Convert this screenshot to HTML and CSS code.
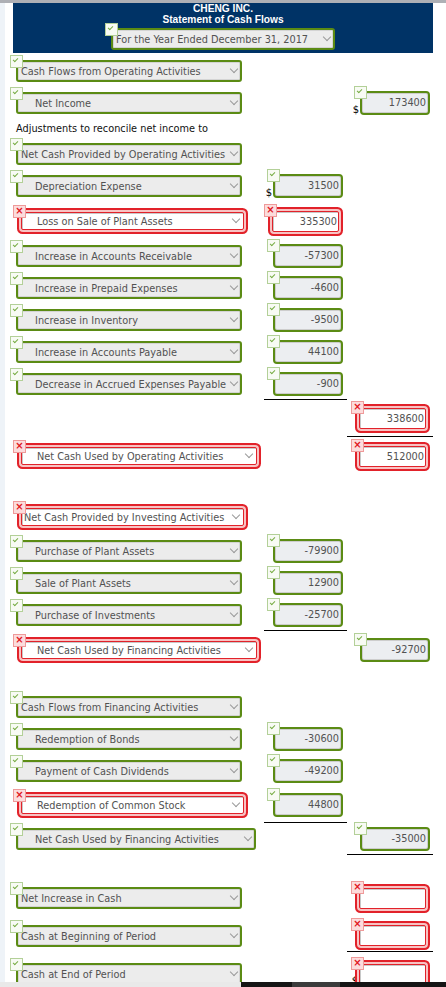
FILE: index.html
```html
<!DOCTYPE html>
<html lang="en">
    <head>
        <meta charset="UTF-8">
        <title>Statement of Cash Flows</title>
        <link rel="stylesheet" href="styles.css">
    </head>
    <body>
        <div class="topbar"></div>
        <div class="page">
            <div class="head">
                <h1>CHENG INC.<br>Statement of Cash Flows</h1>
                <div class="sel ok"><span>For the Year Ended December 31, 2017</span><i class="chev"></i></div>
            </div>
            <div class="sheet">
                <div class="row first">
                    <div class="cell"><div class="sel ok"><span>Cash Flows from Operating Activities</span><i class="chev"></i></div></div>
                </div>
                <div class="row">
                    <div class="cell"><div class="sel ind ok"><span>Net Income</span><i class="chev"></i></div></div>
                    <div class="cell amt"></div>
                    <div class="cell amt r"><b class="cur">$</b><div class="num ok">173400</div></div>
                </div>
                <div class="note">Adjustments to reconcile net income to</div>
                <div class="row">
                    <div class="cell"><div class="sel ok"><span>Net Cash Provided by Operating Activities</span><i class="chev"></i></div></div>
                </div>
                <div class="row">
                    <div class="cell"><div class="sel ind ok"><span>Depreciation Expense</span><i class="chev"></i></div></div>
                    <div class="cell amt"><b class="cur">$</b><div class="num ok">31500</div></div>
                </div>
                <div class="row tall loss">
                    <div class="cell"><div class="sel ind bad"><span>Loss on Sale of Plant Assets</span><i class="chev"></i></div></div>
                    <div class="cell amt"><div class="num bad">335300</div></div>
                </div>
                <div class="row">
                    <div class="cell"><div class="sel ind ok"><span>Increase in Accounts Receivable</span><i class="chev"></i></div></div>
                    <div class="cell amt"><div class="num ok">-57300</div></div>
                </div>
                <div class="row">
                    <div class="cell"><div class="sel ind ok"><span>Increase in Prepaid Expenses</span><i class="chev"></i></div></div>
                    <div class="cell amt"><div class="num ok">-4600</div></div>
                </div>
                <div class="row">
                    <div class="cell"><div class="sel ind ok"><span>Increase in Inventory</span><i class="chev"></i></div></div>
                    <div class="cell amt"><div class="num ok">-9500</div></div>
                </div>
                <div class="row">
                    <div class="cell"><div class="sel ind ok"><span>Increase in Accounts Payable</span><i class="chev"></i></div></div>
                    <div class="cell amt"><div class="num ok">44100</div></div>
                </div>
                <div class="row">
                    <div class="cell"><div class="sel ind ok"><span>Decrease in Accrued Expenses Payable</span><i class="chev"></i></div></div>
                    <div class="cell amt tot"><div class="num ok">-900</div></div>
                </div>
                <div class="row tall sub">
                    <div class="cell"></div>
                    <div class="cell amt"></div>
                    <div class="cell amt r tot"><div class="num bad">338600</div></div>
                </div>
                <div class="row tall">
                    <div class="cell"><div class="sel ind bad wide"><span>Net Cash Used by Operating Activities</span><i class="chev"></i></div></div>
                    <div class="cell amt"></div>
                    <div class="cell amt r"><div class="num bad">512000</div></div>
                </div>

                <div class="row tall invest">
                    <div class="cell"><div class="sel bad"><span>Net Cash Provided by Investing Activities</span><i class="chev"></i></div></div>
                </div>
                <div class="row">
                    <div class="cell"><div class="sel ind ok"><span>Purchase of Plant Assets</span><i class="chev"></i></div></div>
                    <div class="cell amt"><div class="num ok">-79900</div></div>
                </div>
                <div class="row">
                    <div class="cell"><div class="sel ind ok"><span>Sale of Plant Assets</span><i class="chev"></i></div></div>
                    <div class="cell amt"><div class="num ok">12900</div></div>
                </div>
                <div class="row">
                    <div class="cell"><div class="sel ind ok"><span>Purchase of Investments</span><i class="chev"></i></div></div>
                    <div class="cell amt tot"><div class="num ok">-25700</div></div>
                </div>
                <div class="row tall net-invest">
                    <div class="cell"><div class="sel ind bad wide"><span>Net Cash Used by Financing Activities</span><i class="chev"></i></div></div>
                    <div class="cell amt"></div>
                    <div class="cell amt r"><div class="num ok">-92700</div></div>
                </div>

                <div class="row finance">
                    <div class="cell"><div class="sel ok"><span>Cash Flows from Financing Activities</span><i class="chev"></i></div></div>
                </div>
                <div class="row">
                    <div class="cell"><div class="sel ind ok"><span>Redemption of Bonds</span><i class="chev"></i></div></div>
                    <div class="cell amt"><div class="num ok">-30600</div></div>
                </div>
                <div class="row">
                    <div class="cell"><div class="sel ind ok"><span>Payment of Cash Dividends</span><i class="chev"></i></div></div>
                    <div class="cell amt"><div class="num ok">-49200</div></div>
                </div>
                <div class="row tall">
                    <div class="cell"><div class="sel ind bad"><span>Redemption of Common Stock</span><i class="chev"></i></div></div>
                    <div class="cell amt tot"><div class="num ok">44800</div></div>
                </div>
                <div class="row">
                    <div class="cell"><div class="sel ind ok wide"><span>Net Cash Used by Financing Activities</span><i class="chev"></i></div></div>
                    <div class="cell amt"></div>
                    <div class="cell amt r tot"><div class="num ok">-35000</div></div>
                </div>

                <div class="row cash">
                    <div class="cell"><div class="sel ok"><span>Net Increase in Cash</span><i class="chev"></i></div></div>
                    <div class="cell amt"></div>
                    <div class="cell amt r"><div class="num bad"></div></div>
                </div>
                <div class="row cash-next">
                    <div class="cell"><div class="sel ok"><span>Cash at Beginning of Period</span><i class="chev"></i></div></div>
                    <div class="cell amt"></div>
                    <div class="cell amt r tot"><div class="num bad"></div></div>
                </div>
                <div class="row cash-next">
                    <div class="cell"><div class="sel ok"><span>Cash at End of Period</span><i class="chev"></i></div></div>
                    <div class="cell amt"></div>
                    <div class="cell amt r"><b class="cur">$</b><div class="num bad"></div></div>
                </div>
            </div>
        </div>
        <div class="hscroll"><span class="track"></span><span class="rail"><span class="thumb"></span></span></div>
    </body>
</html>
```

FILE: styles.css
```css
*{
    margin:0;
    padding:0;
    box-sizing:border-box;
}
html,body{
    overflow:hidden;
}
body{
    font-family:"DejaVu Sans", Verdana, sans-serif;
    font-size:9.75px;
    color:#525252;
    background:#fff;
}
.topbar{
    height:3px;
    background:#aeb0b5;
}
.page{
    border-left:5px solid #eef3f8;
    padding-left:8px;
    min-height:990px;
}

/* header block */
.head{
    width:420px;
    background:#003366;
    padding-bottom:3px;
    text-align:center;
}
.head h1{
    font:bold 10.2px/11px "Liberation Sans", Arial, sans-serif;
    color:#fff;
}
.head .sel{
    width:224px;
    margin:3px auto 0;
    text-align:left;
}

/* statement rows */
.sheet{
    padding-left:3px;
}
.row{
    display:grid;
    grid-template-columns:248px 83px 86px;
    height:32px;
}
.row.tall{
    height:36px;
}
.row.first{ margin-top:2px; }
.row.loss,.row.sub{ margin:1px 0; }
.row.invest{ margin-top:25px; }
.row.net-invest{ margin-top:1px; }
.row.finance{ margin-top:23px; }
.row.cash{ margin-top:27px; }
.row.cash-next{ margin-top:6px; }

.cell{
    display:flex;
    align-items:center;
}
.amt{
    justify-content:flex-end;
    padding-right:4px;
}
.amt.r{
    padding-right:3px;
}
.tot{
    border-bottom:1px solid #000;
}
.note{
    height:19px;
    line-height:19px;
    color:#111;
}
.cur{
    font-weight:normal;
    color:#000;
    font-size:10px;
    line-height:10px;
    margin:14px 1px 0 0;
}

/* dropdowns */
.sel{
    position:relative;
    display:flex;
    align-items:center;
    height:22px;
    width:226px;
    padding:0 2px 0 3px;
    border:2px solid #5b8b14;
    border-radius:3px;
    background:#ececec;
    box-shadow:inset 0 0 0 1px #d4d4d4;
    white-space:nowrap;
}
.sel span{
    flex:1;
}
.sel.ind{
    padding-left:17px;
}
.sel.wide{
    width:240px;
}
.sel.bad{
    height:18px;
    width:223px;
    margin-left:5px;
    padding:0 3px 0 2px;
    border:1px solid #e2222a;
    border-radius:2px;
    background:#fff;
    box-shadow:inset 1px 1px 0 #c8c8c8, 0 0 0 2px #f8c3c3, 0 0 0 4px #e2222a;
}
.sel.bad.ind{
    padding-left:15px;
}
.sel.bad.wide{
    width:236px;
}
.chev{
    width:6px;
    height:6px;
    border-right:1px solid #9a9a9a;
    border-bottom:1px solid #9a9a9a;
    transform:rotate(45deg);
    margin:-4px 1px 0 0;
}

/* amount boxes */
.num{
    position:relative;
    width:70px;
    height:24px;
    padding-right:2px;
    border:2px solid #5b8b14;
    border-radius:4px;
    background:#eceef1;
    box-shadow:inset 0 0 0 1px #cdcdcd;
    text-align:right;
    line-height:20px;
}
.num.bad{
    width:67px;
    height:21px;
    margin-right:4px;
    padding-right:1px;
    border:1px solid #e2222a;
    border-radius:2px;
    background:#fff;
    line-height:19px;
    box-shadow:inset 1px 1px 0 #c8c8c8, 0 0 0 2px #f8c3c3, 0 0 0 4px #e2222a;
}

/* answer markers */
.ok::before,.bad::before{
    position:absolute;
    width:11px;
    height:11px;
    z-index:1;
}
.ok::before{
    content:"";
    left:-8px;
    top:-7px;
    border:1px solid #b3d098;
    background:#f8fbf4;
}
.ok::after{
    content:"";
    position:absolute;
    z-index:2;
    left:-5px;
    top:-4px;
    width:4px;
    height:2px;
    border-left:1px solid #78ad45;
    border-bottom:1px solid #78ad45;
    transform:rotate(-45deg);
}
.bad::before{
    content:"\00d7";
    left:-9px;
    top:-8px;
    border:1px solid #ef9a9a;
    background:#fcdcdc;
    color:#e0141c;
    font:bold 10px/9px "DejaVu Sans", sans-serif;
    text-align:center;
}

/* window scrollbar strip */
.hscroll{
    position:fixed;
    left:0;
    right:0;
    bottom:0;
    height:5px;
    display:flex;
}
.hscroll .track{
    width:241px;
    background:#e9e9e9;
}
.hscroll .rail{
    flex:1;
    background:#151515;
    padding-left:51px;
}
.hscroll .thumb{
    display:block;
    width:48px;
    height:100%;
    background:#3b3b3b;
}
```
